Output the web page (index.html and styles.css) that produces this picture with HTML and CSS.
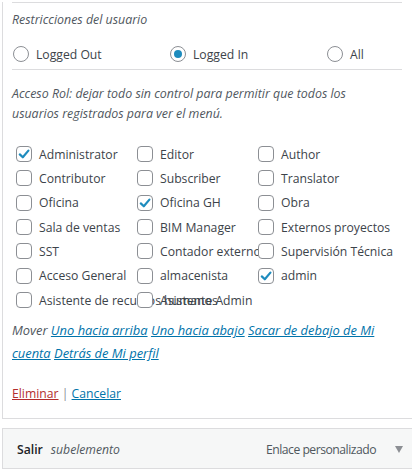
FILE: index.html
```html
<!DOCTYPE html>
<html lang="es">
<head>
<meta charset="utf-8">
<title>Restricciones del usuario</title>
<link rel="stylesheet" href="styles.css">
</head>
<body>
<div class="page">
  <div class="panel">
    <div class="sect sect-top">
      <p class="desc title">Restricciones del usuario</p>
      <div class="radios">
        <label class="radio"><span class="rbox"></span>Logged Out</label>
        <label class="radio"><span class="rbox on"></span>Logged In</label>
        <label class="radio"><span class="rbox"></span>All</label>
      </div>
    </div>
    <div class="sect sect-roles">
      <p class="desc note">Acceso Rol: dejar todo sin control para permitir que todos los usuarios registrados para ver el menú.</p>
      <div class="roles">
        <label class="role"><span class="cbox on"><svg viewBox="0 0 16 16"><path d="M3.8 8.4 L6.8 11.3 L12.4 4.6"/></svg></span>Administrator</label>
        <label class="role"><span class="cbox"></span>Editor</label>
        <label class="role"><span class="cbox"></span>Author</label>
        <label class="role"><span class="cbox"></span>Contributor</label>
        <label class="role"><span class="cbox"></span>Subscriber</label>
        <label class="role"><span class="cbox"></span>Translator</label>
        <label class="role"><span class="cbox"></span>Oficina</label>
        <label class="role"><span class="cbox on"><svg viewBox="0 0 16 16"><path d="M3.8 8.4 L6.8 11.3 L12.4 4.6"/></svg></span>Oficina GH</label>
        <label class="role"><span class="cbox"></span>Obra</label>
        <label class="role"><span class="cbox"></span>Sala de ventas</label>
        <label class="role"><span class="cbox"></span>BIM Manager</label>
        <label class="role"><span class="cbox"></span>Externos proyectos</label>
        <label class="role"><span class="cbox"></span>SST</label>
        <label class="role"><span class="cbox"></span>Contador externo</label>
        <label class="role"><span class="cbox"></span>Supervisión Técnica</label>
        <label class="role"><span class="cbox"></span>Acceso General</label>
        <label class="role"><span class="cbox"></span>almacenista</label>
        <label class="role"><span class="cbox on"><svg viewBox="0 0 16 16"><path d="M3.8 8.4 L6.8 11.3 L12.4 4.6"/></svg></span>admin</label>
        <label class="role"><span class="cbox"></span>Asistente de recursos humanos</label>
        <label class="role"><span class="cbox"></span>Asistente Admin</label>
      </div>
      <p class="move"><span class="move-label">Mover</span> <a href="#">Uno hacia arriba</a> <a href="#">Uno hacia abajo</a> <a href="#">Sacar de debajo de Mi cuenta</a> <a href="#">Detrás de Mi perfil</a></p>
      <p class="actions"><a href="#" class="delete">Eliminar</a> <span class="sep">|</span> <a href="#">Cancelar</a></p>
    </div>
  </div>
  <div class="handle">
    <span class="item-title">Salir</span>
    <span class="item-sub">subelemento</span>
    <span class="item-type">Enlace personalizado</span>
    <span class="item-arrow"></span>
  </div>
</div>
</body>
</html>
```
FILE: styles.css
```css
html, body {
  margin: 0;
  padding: 0;
  background: #fff;
}
body {
  font-family: "Open Sans", "Noto Sans", sans-serif;
  font-size: 12.2px;
  color: #3c434a;
  overflow: hidden;
  width: 412px;
  height: 469px;
}
.page {
  padding-top: 2px;
}
p { margin: 0; }
a { color: #0073aa; }

.panel {
  margin-left: 2px;
  width: 420px;
  box-sizing: border-box;
  border-left: 1px solid #dcdcde;
  border-bottom: 1px solid #dcdcde;
  padding: 0 9px;
}
.sect {
  width: 390px;
}
.sect-top {
  border-top: 1px solid #dcdcde;
  border-bottom: 1px solid #dcdcde;
  height: 66px;
}
.desc {
  font-style: italic;
  color: #50575e;
}
.title {
  padding-top: 8px;
  line-height: 18px;
  font-size: 12.4px;
}
.radios {
  display: grid;
  grid-template-columns: 157px 157px 76px;
  margin-top: 16px;
  margin-left: 1px;
}
.radio {
  display: flex;
  align-items: center;
  gap: 7px;
  white-space: nowrap;
  height: 18px;
}
.rbox {
  width: 16px;
  height: 16px;
  border: 1px solid #8c8f94;
  border-radius: 50%;
  box-sizing: border-box;
  display: flex;
  align-items: center;
  justify-content: center;
  background: #fff;
  flex: none;
}
.rbox.on::after {
  content: "";
  width: 8px;
  height: 8px;
  border-radius: 50%;
  background: #1e8cbe;
}

.sect-roles {
  padding-top: 14px;
}
.note {
  line-height: 20px;
  font-size: 12.4px;
  max-width: 340px;
}
.roles {
  display: grid;
  grid-template-columns: repeat(3, 121px);
  grid-auto-rows: 24.33px;
  margin-top: 18px;
  margin-left: 4px;
}
.role {
  display: flex;
  align-items: center;
  gap: 7px;
  white-space: nowrap;
  min-width: 0;
}
.cbox {
  position: relative;
  width: 16px;
  height: 16px;
  border: 1px solid #8c8f94;
  border-radius: 4px;
  box-sizing: border-box;
  background: #fff;
  flex: none;
}
.cbox svg {
  position: absolute;
  left: -1px;
  top: -1px;
  width: 16px;
  height: 16px;
}
.cbox path {
  fill: none;
  stroke: #1e8cbe;
  stroke-width: 2.2;
  stroke-linecap: round;
  stroke-linejoin: round;
}
.move {
  margin-top: 7px;
  line-height: 23px;
  font-style: italic;
  font-size: 12.9px;
}
.move-label {
  color: #50575e;
}
.actions {
  margin-top: 20px;
  line-height: 18px;
  padding-bottom: 15px;
}
.actions .delete {
  color: #b32d2e;
}
.sep {
  color: #8c8f94;
}

.handle {
  margin-top: 9px;
  margin-left: 2px;
  width: 420px;
  height: 41px;
  box-sizing: border-box;
  border: 1px solid #dcdcde;
  background: #f6f7f7;
  display: flex;
  align-items: center;
  padding-left: 14px;
  padding-top: 1px;
}
.item-title {
  font-weight: 600;
  color: #1d2327;
}
.item-sub {
  font-style: italic;
  color: #50575e;
  margin-left: 8px;
}
.item-type {
  margin-left: auto;
  color: #50575e;
  margin-right: 19px;
  letter-spacing: -0.5px;
}
.item-arrow {
  width: 0;
  height: 0;
  border-left: 4px solid transparent;
  border-right: 4px solid transparent;
  border-top: 7px solid #8c8f94;
  margin-right: 18px;
}
```
